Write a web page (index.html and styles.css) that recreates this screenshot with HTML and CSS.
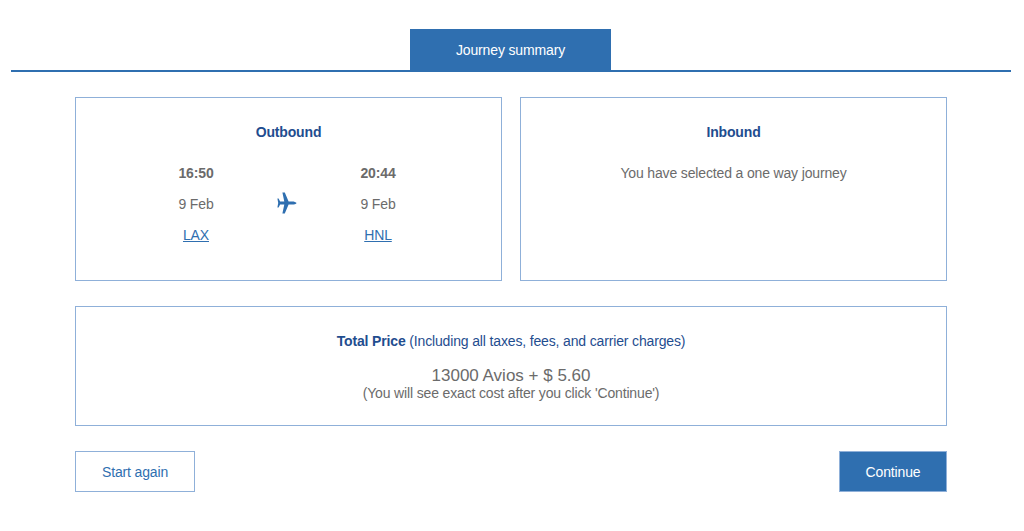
FILE: index.html
```html
<!DOCTYPE html>
<html lang="en">
<head>
    <meta charset="UTF-8">
    <meta name="viewport" content="width=device-width, initial-scale=1.0">
    <title>Journey summary</title>
    <link rel="stylesheet" href="styles.css">
</head>
<body>

<div class="container">
    <div class="tab-bar">
        <div class="tab">Journey summary</div>
    </div>

    <div class="content">
        <div class="journeys">
            <div class="card">
                <h2 class="card-title">Outbound</h2>
                <div class="flight">
                    <div class="flight-point">
                        <strong>16:50</strong>
                        <span>9 Feb</span>
                        <a href="#">LAX</a>
                    </div>
                    <svg class="plane" viewBox="0 0 20 22" width="20" height="22" aria-hidden="true">
                        <path d="M19.6 11C19.1 10 17.2 9.4 15 9.4L11.6 9.4L7.8 .4L5.4 .4L7.3 9.4L3.1 9.4L1.6 6.4L.4 6.4L1.2 11L.4 15.6L1.6 15.6L3.1 12.6L7.3 12.6L5.4 21.6L7.8 21.6L11.6 12.6L15 12.6C17.2 12.6 19.1 12 19.6 11Z"/>
                    </svg>
                    <div class="flight-point">
                        <strong>20:44</strong>
                        <span>9 Feb</span>
                        <a href="#">HNL</a>
                    </div>
                </div>
            </div>
            <div class="card">
                <h2 class="card-title">Inbound</h2>
                <p class="one-way">You have selected a one way journey</p>
            </div>
        </div>

        <div class="price">
            <p class="price-title"><strong>Total Price</strong> (Including all taxes, fees, and carrier charges)</p>
            <p class="price-amount">13000 Avios + $ 5.60</p>
            <p class="price-note">(You will see exact cost after you click 'Continue')</p>
        </div>

        <div class="controls">
            <button class="btn-secondary">Start again</button>
            <button class="btn-primary">Continue</button>
        </div>
    </div>
</div>

</body>
</html>
```

FILE: styles.css
```css
/* General Styling */
body {
    margin: 0;
    background-color: #fff;
    color: #6b6b6b;
    font-family: "Liberation Sans", Arial, sans-serif;
    font-size: 14px;
    letter-spacing: -0.15px;
}

.container {
    width: 1000px;
    margin: 0 auto 0 11px;
    padding-top: 29px;
}

/* Tab */
.tab-bar {
    display: flex;
    justify-content: center;
    border-bottom: 2px solid #2f6fb0;
}

.tab {
    width: 201px;
    height: 43px;
    margin: 0 1px -2px 0;
    background-color: #2f6fb0;
    color: #fff;
    line-height: 43px;
    text-align: center;
}

/* Content */
.content {
    padding: 25px 64px 0;
}

.journeys {
    display: flex;
    gap: 18px;
}

.card {
    flex: 1;
    height: 184px;
    box-sizing: border-box;
    border: 1px solid #8fb0d9;
    padding-top: 25px;
    text-align: center;
}

.card-title {
    margin: 0;
    color: #1f4d8f;
    font-size: 14px;
    line-height: 18px;
}

.one-way {
    margin: 23px 0 0;
    line-height: 18px;
}

/* Flight */
.flight {
    display: grid;
    grid-template-columns: repeat(3, 91px);
    justify-content: center;
    align-items: center;
    justify-items: center;
    margin-top: 23px;
    padding-right: 3px;
}

.flight-point {
    display: flex;
    flex-direction: column;
    gap: 13px;
    line-height: 18px;
}

.flight-point a {
    color: #2f6fb0;
}

.plane {
    margin-top: -3px;
    fill: #2f6fb0;
}

/* Price */
.price {
    height: 120px;
    box-sizing: border-box;
    margin-top: 25px;
    border: 1px solid #8fb0d9;
    padding-top: 25px;
    text-align: center;
}

.price p {
    margin: 0;
}

.price-title {
    color: #1f4d8f;
    line-height: 18px;
}

.price .price-amount {
    margin-top: 16px;
    font-size: 17px;
    letter-spacing: 0;
    line-height: 20px;
}

.price-note {
    line-height: 15px;
}

/* Controls */
.controls {
    display: flex;
    justify-content: space-between;
    margin-top: 25px;
}

.controls button {
    height: 41px;
    border: 1px solid #8fb0d9;
    font-family: inherit;
    font-size: 14px;
    letter-spacing: inherit;
    cursor: pointer;
}

.btn-secondary {
    width: 120px;
    background-color: #fff;
    color: #2f6fb0;
}

.btn-primary {
    width: 108px;
    background-color: #2f6fb0;
    color: #fff;
}
```
